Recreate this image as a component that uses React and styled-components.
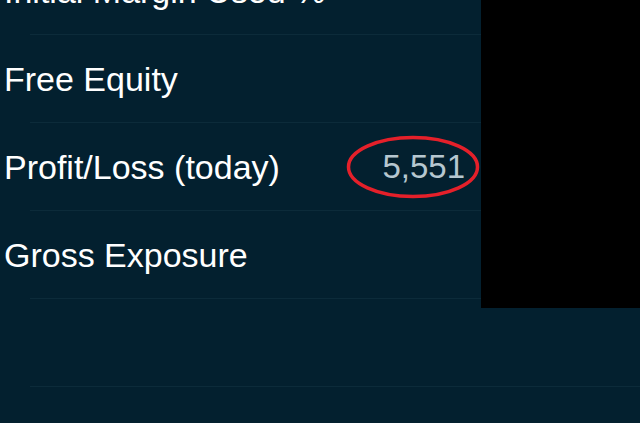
import styled, {createGlobalStyle} from 'styled-components';

const GlobalStyle = createGlobalStyle`
  html, body {
    margin: 0;
    padding: 0;
    background: #03202f;
    overflow: hidden;
  }
  body {
    font-family: "Liberation Sans", Arial, sans-serif;
  }
`

const rows = [
  {label: 'Initial Margin Used %'},
  {label: 'Free Equity'},
  {label: 'Profit/Loss (today)', value: '5,551', marked: true},
  {label: 'Gross Exposure'},
  {label: ''},
]

function App() {
  return (
    <Screen>
      <GlobalStyle />
      <List>
        {rows.map((row, i) => (
          <Row key={i}>
            <Label>{row.label}</Label>
            {row.value && (
              <Value>
                {row.value}
                {row.marked && (
                  <Circle viewBox="0 0 134 64" aria-hidden="true">
                    <ellipse cx="67" cy="32" rx="64.5" ry="29.5" fill="none" stroke="#e5202a" strokeWidth="3.5" />
                  </Circle>
                )}
              </Value>
            )}
          </Row>
        ))}
      </List>
      <Redacted />
    </Screen>
  )
}

const Screen = styled.div`
  position: relative;
  width: 640px;
  height: 423px;
  overflow: hidden;
  background: #03202f;
`

const List = styled.div`
  display: flex;
  flex-direction: column;
  margin-top: -53px;
`

const Row = styled.div`
  position: relative;
  height: 87px;
  display: flex;
  align-items: center;
  justify-content: space-between;
  padding: 0 175px 0 4px;
  border-bottom: 1px solid transparent;

  &::after {
    content: '';
    position: absolute;
    left: 30px;
    right: 0;
    bottom: -1px;
    height: 1px;
    background: #0c2b3a;
  }
`

const Label = styled.span`
  color: #ffffff;
  font-size: 34px;
  line-height: 1;
  white-space: nowrap;
`

const Value = styled.span`
  position: relative;
  color: #b6c7d0;
  font-size: 33px;
  line-height: 1;
`

const Circle = styled.svg`
  position: absolute;
  left: -36px;
  top: 50%;
  width: 134px;
  height: 64px;
  transform: translateY(-50%);
  pointer-events: none;
`

const Redacted = styled.div`
  position: absolute;
  top: 0;
  right: 0;
  width: 159px;
  height: 308px;
  background: #000;
`

export default App
